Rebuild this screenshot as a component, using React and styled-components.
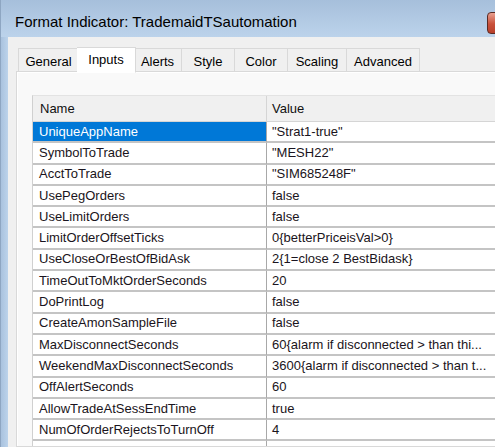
import React from 'react';
import styled, { createGlobalStyle } from 'styled-components';

const Global = createGlobalStyle`
  html, body {
    margin: 0;
    padding: 0;
    overflow: hidden;
  }
  body {
    font-family: 'Liberation Sans', Arial, sans-serif;
  }
`;

const Window = styled.div`
  width: 495px;
  height: 447px;
  display: flex;
  flex-direction: column;
  overflow: hidden;
  background: #f0f0f0;
`;

const TitleBar = styled.div`
  height: 37px;
  flex-shrink: 0;
  display: flex;
  align-items: center;
  justify-content: space-between;
  padding-left: 14px;
  background: linear-gradient(#a6bfdb, #bcd3eb);
  border-left: 1px solid #8ea6c2;
  box-sizing: border-box;
`;

const Title = styled.div`
  font-size: 15px;
  color: #000;
  padding-top: 6px;
  white-space: nowrap;
`;

const CloseButton = styled.div`
  width: 40px;
  height: 20px;
  margin-right: -34px;
  margin-top: 8px;
  border: 1px solid #5a2a24;
  border-radius: 4px;
  background: linear-gradient(#e8a090, #c9503a 55%, #b8402c);
  flex-shrink: 0;
`;

const Body = styled.div`
  flex: 1;
  display: flex;
  min-height: 0;
`;

const Frame = styled.div`
  width: 8px;
  flex-shrink: 0;
  background: linear-gradient(90deg, #a9c2de, #bcd3eb);
  border-left: 1px solid #8ea6c2;
  box-sizing: border-box;
`;

const Client = styled.div`
  flex: 1;
  display: flex;
  flex-direction: column;
  padding: 9px 0 0 8px;
  min-width: 0;
`;

const TabStrip = styled.div`
  display: flex;
  align-items: flex-end;
  padding-left: 2px;
  height: 26px;
  position: relative;
  z-index: 1;
`;

const Tab = styled.div`
  width: ${p => p.w}px;
  height: ${p => (p.active ? 26 : 24)}px;
  box-sizing: border-box;
  display: flex;
  justify-content: center;
  align-items: ${p => (p.active ? 'flex-start' : 'center')};
  padding-top: ${p => (p.active ? 4 : 2)}px;
  font-size: 13px;
  color: #000;
  background: ${p => (p.active ? '#ffffff' : '#f0f0f0')};
  border: 1px solid #d9d9d9;
  border-bottom: ${p => (p.active ? '1px solid #ffffff' : '1px solid #d9d9d9')};
  margin: ${p => (p.active ? '0 -2px -1px' : '0')};
  position: relative;
  z-index: ${p => (p.active ? 2 : 1)};
  & + & {
    border-left: ${p => (p.active ? '1px solid #d9d9d9' : 'none')};
  }
`;

const Panel = styled.div`
  flex: 1;
  margin-top: -1px;
  border: 1px solid #d9d9d9;
  border-right: none;
  box-shadow: inset 1px 1px 0 #ffffff;
  background: #f9f9f9;
  padding: 23px 0 0 15px;
  overflow: hidden;
`;

const Grid = styled.div`
  display: grid;
  grid-template-columns: 234px 240px;
  border-top: 1px solid #e3e3e3;
  border-left: 1px solid #d0d0d0;
  background: #ffffff;
  font-size: 13px;
  color: #111;
`;

const HeadCell = styled.div`
  height: 26px;
  box-sizing: border-box;
  display: flex;
  align-items: center;
  padding-left: ${p => (p.first ? 7 : 5)}px;
  background: #f0f0f0;
  border-right: 1px solid #d5d5d5;
  border-bottom: 1px solid #d5d5d5;
  white-space: nowrap;
`;

const Cell = styled.div`
  height: 21.3px;
  box-sizing: border-box;
  display: flex;
  align-items: center;
  padding-left: ${p => (p.first ? 6 : 5)}px;
  padding-bottom: 1px;
  background: ${p => (p.selected ? '#0078d7' : '#ffffff')};
  color: ${p => (p.selected ? '#ffffff' : '#1a1420')};
  border-right: 1px solid ${p => (p.first ? '#a8a8a8' : '#d0d0d0')};
  border-bottom: 2px solid #c4c4c4;
  white-space: nowrap;
  overflow: hidden;
`;

const tabs = [
  { label: 'General', w: 61 },
  { label: 'Inputs', w: 59, active: true },
  { label: 'Alerts', w: 48 },
  { label: 'Style', w: 53 },
  { label: 'Color', w: 53 },
  { label: 'Scaling', w: 59 },
  { label: 'Advanced', w: 73 },
];

const rows = [
  ['UniqueAppName', '"Strat1-true"'],
  ['SymbolToTrade', '"MESH22"'],
  ['AcctToTrade', '"SIM685248F"'],
  ['UsePegOrders', 'false'],
  ['UseLimitOrders', 'false'],
  ['LimitOrderOffsetTicks', '0{betterPriceisVal>0}'],
  ['UseCloseOrBestOfBidAsk', '2{1=close 2 BestBidask}'],
  ['TimeOutToMktOrderSeconds', '20'],
  ['DoPrintLog', 'false'],
  ['CreateAmonSampleFile', 'false'],
  ['MaxDisconnectSeconds', '60{alarm if disconnected > than thi...'],
  ['WeekendMaxDisconnectSeconds', '3600{alarm if disconnected > than t...'],
  ['OffAlertSeconds', '60'],
  ['AllowTradeAtSessEndTime', 'true'],
  ['NumOfOrderRejectsToTurnOff', '4'],
  ['', ''],
];

export default function App() {
  return (
    <>
      <Global />
      <Window>
        <TitleBar>
          <Title>Format Indicator: TrademaidTSautomation</Title>
          <CloseButton />
        </TitleBar>
        <Body>
          <Frame />
          <Client>
            <TabStrip>
              {tabs.map(t => (
                <Tab key={t.label} w={t.w} active={t.active}>
                  {t.label}
                </Tab>
              ))}
            </TabStrip>
            <Panel>
              <Grid>
                <HeadCell first>Name</HeadCell>
                <HeadCell>Value</HeadCell>
                {rows.map(([name, value], i) => (
                  <React.Fragment key={i}>
                    <Cell first selected={i === 0}>{name}</Cell>
                    <Cell>{value}</Cell>
                  </React.Fragment>
                ))}
              </Grid>
            </Panel>
          </Client>
        </Body>
      </Window>
    </>
  );
}
